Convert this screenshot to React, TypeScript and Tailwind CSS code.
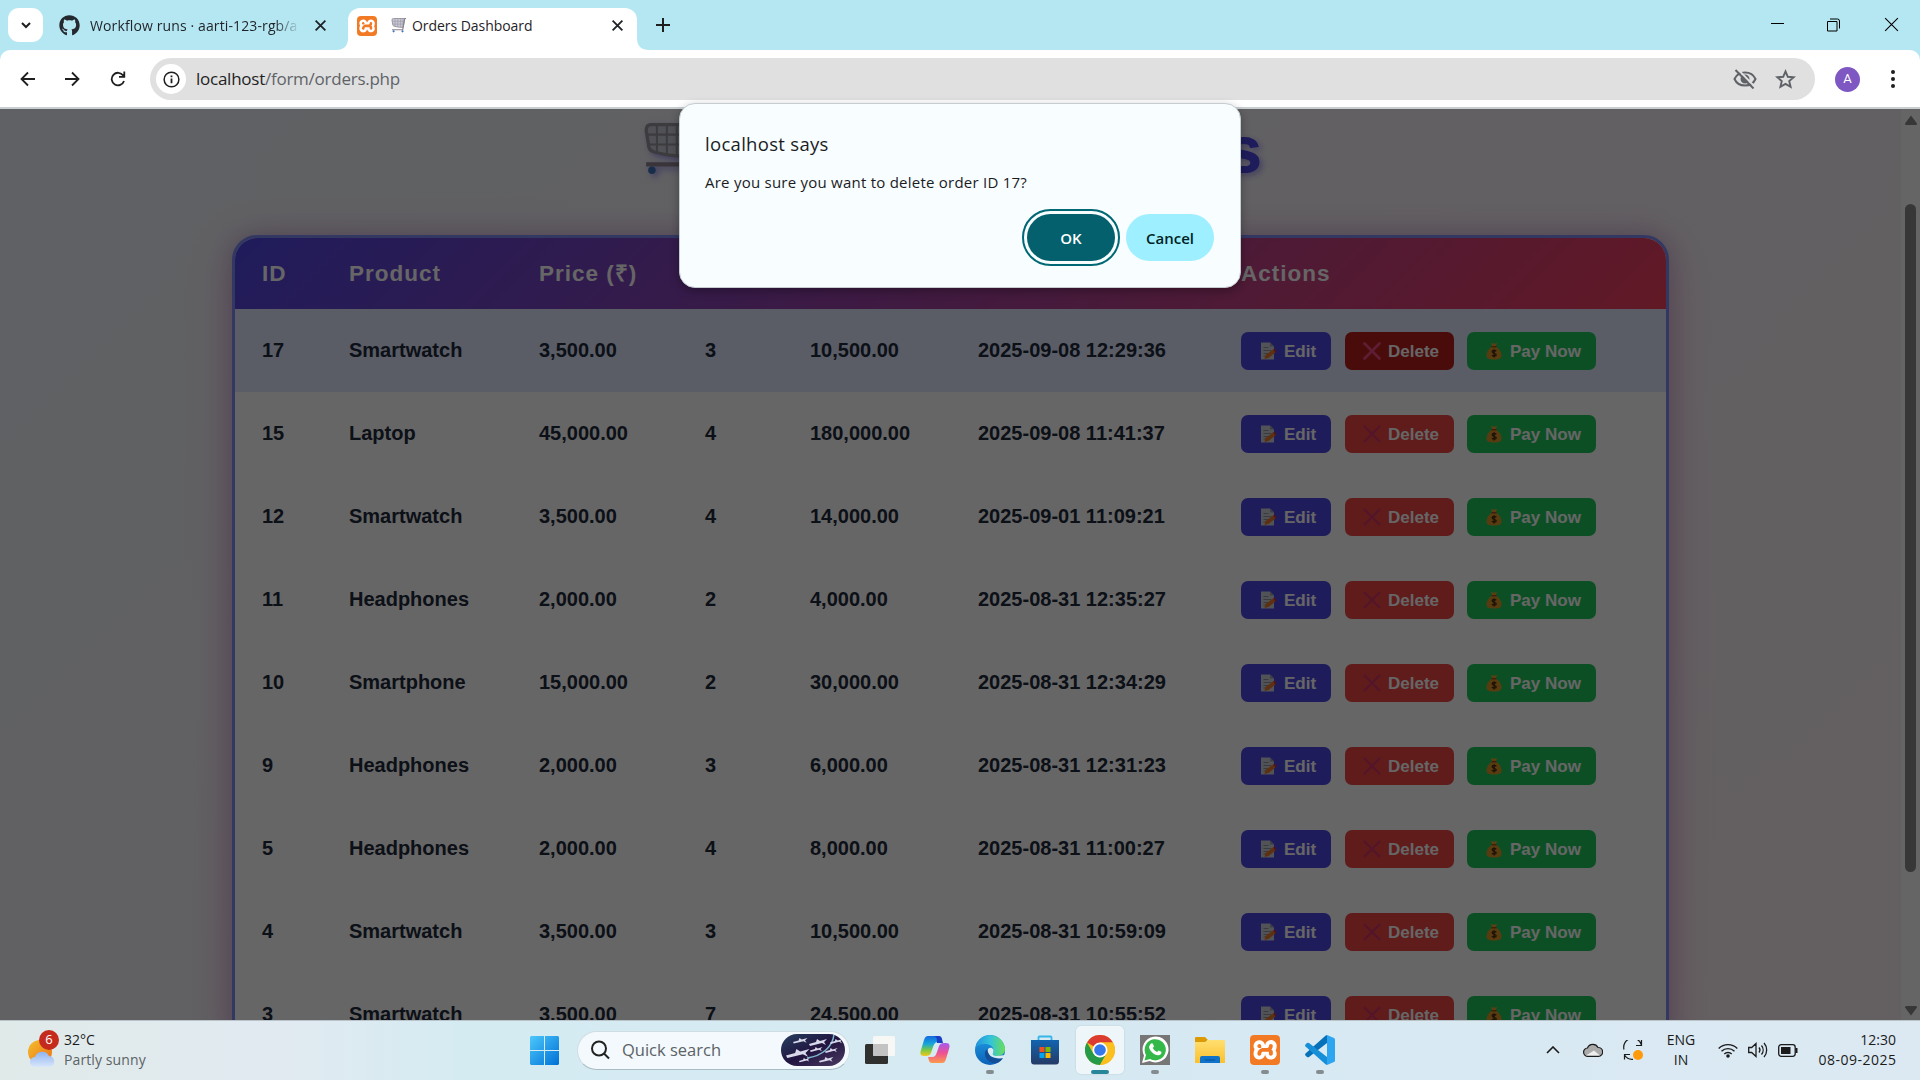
import React from "react";
import { FaGithub } from "react-icons/fa";
import { SiXampp } from "react-icons/si";

const orders = [
  ["17", "Smartwatch", "3,500.00", "3", "10,500.00", "2025-09-08 12:29:36"],
  ["15", "Laptop", "45,000.00", "4", "180,000.00", "2025-09-08 11:41:37"],
  ["12", "Smartwatch", "3,500.00", "4", "14,000.00", "2025-09-01 11:09:21"],
  ["11", "Headphones", "2,000.00", "2", "4,000.00", "2025-08-31 12:35:27"],
  ["10", "Smartphone", "15,000.00", "2", "30,000.00", "2025-08-31 12:34:29"],
  ["9", "Headphones", "2,000.00", "3", "6,000.00", "2025-08-31 12:31:23"],
  ["5", "Headphones", "2,000.00", "4", "8,000.00", "2025-08-31 11:00:27"],
  ["4", "Smartwatch", "3,500.00", "3", "10,500.00", "2025-08-31 10:59:09"],
  ["3", "Smartwatch", "3,500.00", "7", "24,500.00", "2025-08-31 10:55:52"],
];

function Cart({ className }: { className: string }) {
  return (
    <svg viewBox="0 0 64 64" className={className} fill="none">
      <path d="M8 2h48l-6 38c-14 0-28-2-38-5-5-1-7-4-7-8L2 9q0-7 6-7z" fill="#c9cad8" stroke="#96939c" strokeWidth="4" strokeLinejoin="round" />
      <path d="M15 3v33M27 3v35M39 3v36M49 3v36M3 14h50M5 26h47" stroke="#96939c" strokeWidth="2.500" />
      <path d="M62 1l-6 3-8 46H2" stroke="#8e8390" strokeWidth="5" />
      <circle cx="9" cy="57" r="4.500" fill="#3a72b8" />
      <circle cx="47" cy="57" r="4.500" fill="#3a72b8" />
    </svg>
  );
}

function Xampp({ className }: { className: string }) {
  return (
    <span className={`relative block overflow-hidden rounded-[4px] bg-white ${className}`}>
      <SiXampp className="h-full w-full scale-[1.06] text-[#f37a24]" />
    </span>
  );
}

const MemoIcon = () => (
  <svg viewBox="0 0 18 18" className="h-[18px] w-[18px]">
    <path d="M2 .5h9l4 4V17.500H2z" fill="#cdd0d8" />
    <path d="M11 .5l4 4h-4z" fill="#9a9fab" />
    <path d="M4.500 5.500h5M4.500 8.500h8M4.500 11.500h5M4.500 14h3" stroke="#8f94a1" />
    <path d="M5.500 17l1-4 7.500-5.500 2.500 3-7 5.500z" fill="#e8782e" />
    <path d="M14 7.500l1.500-1 2 3-1 1z" fill="#d8342c" />
  </svg>
);
const CrossIcon = ({ strong }: { strong: boolean }) => (
  <svg viewBox="0 0 18 18" className="h-[18px] w-[18px]" fill="none">
    <path d="M1.500 1.500l15 15M16.500 1.500l-15 15" className={strong ? "stroke-[#ee4a83]" : "stroke-[#cf3568]"} strokeWidth={strong ? 2.8 : 2} strokeLinecap="round" />
  </svg>
);
const MoneyIcon = () => (
  <svg viewBox="0 0 18 18" className="h-[18px] w-[18px]">
    <path d="M6 1l3 .8L12 1l-1.300 3.500H7.300z" fill="#e6a12c" />
    <path d="M6.500 5h5c3 2 5 5 5 8.500 0 3-2.500 4-7.500 4s-7.500-1-7.500-4C1.500 10 3.500 7 6.500 5z" fill="#dd962a" />
    <path d="M6.500 4.700h5" stroke="#a8481c" strokeWidth="1.500" />
    <path d="M11.200 9.200c-.8-1-4-1-4 .6 0 1.800 4 1.200 4 3 0 1.700-3.400 1.600-4.200.4M9.100 7.200v8.300" stroke="#4a2e10" strokeWidth="1.400" fill="none" />
  </svg>
);

function ActionButton({ icon, label, tone }: { icon: React.ReactNode; label: string; tone: string }) {
  return (
    <button className={`flex h-[38px] items-center gap-[7px] rounded-[7px] pl-[18px] text-[17px] font-bold text-white ${tone}`}>
      {icon}
      <span className="whitespace-nowrap pt-px">{label}</span>
    </button>
  );
}

const cols = "grid grid-cols-[87px_190px_166px_105px_168px_263px_1fr] items-center pl-[27px]";

function OrdersPage() {
  return (
    <div className="flex h-full flex-col items-center bg-[linear-gradient(135deg,#eff3f9_0%,#f4f0f6_50%,#faeff3_100%)] pr-[19px] font-['Liberation_Sans',Arial,sans-serif]">
      <h1 className="mt-[14px] flex h-[112px] w-[622px] shrink-0 items-start justify-between text-[64px] font-black leading-[54px] text-[#4f46e5] [-webkit-text-stroke:1px_#4f46e5] [text-shadow:3px_3px_6px_rgba(79,70,229,0.5)]">
        <Cart className="h-[53px] w-[62px] drop-shadow-[3px_3px_3px_rgba(79,70,229,0.5)]" />
        <span>Orders</span>
      </h1>
      <div className="w-[1437px] shrink-0 overflow-hidden rounded-[25px] border-[3px] border-[#818cf8] bg-white shadow-[0_10px_45px_rgba(236,72,153,0.28),0_0_25px_rgba(90,50,150,0.28)]">
        <div className={`${cols} h-[71px] bg-[linear-gradient(135deg,#4f46e5,#f43f5e)] text-[22.5px] font-bold tracking-[1px] text-white`}>
          <span>ID</span><span>Product</span><span>Price (₹)</span><span>Qty</span><span>Total (₹)</span><span>Date</span><span>Actions</span>
        </div>
        {orders.map((o, i) => (
          <div key={o[0]} className={`${cols} h-[83px] text-[20px] font-bold text-[#1e293b] ${i === 0 ? "bg-[#e0e7ff]" : "bg-white"}`}>
            {o.map((v, j) => <span key={j} className="pb-[2px]">{v}</span>)}
            <div className="flex pt-px">
              <ActionButton icon={<MemoIcon />} label="Edit" tone="mr-[14px] w-[90px] bg-[#4f46e5]" />
              <ActionButton icon={<CrossIcon strong={i === 0} />} label="Delete" tone={i === 0 ? "mr-[13px] w-[109px] bg-[#b91c1c]" : "mr-[13px] w-[109px] bg-[#ef4444]"} />
              <ActionButton icon={<MoneyIcon />} label="Pay Now" tone="w-[129px] bg-[#22c55e]" />
            </div>
          </div>
        ))}
      </div>
    </div>
  );
}

const X = ({ className }: { className: string }) => (
  <svg viewBox="0 0 12 12" className={className} fill="none" stroke="currentColor"><path d="M1.500 1.500l9 9M10.500 1.500l-9 9" /></svg>
);

function TabStrip() {
  return (
    <div className="flex h-[50px] shrink-0 items-end bg-[#b5e7f2] text-[14px] text-[#1f2328]">
      <div className="mb-2 ml-2 flex h-[34px] w-[35px] items-center justify-center rounded-[11px] bg-white">
        <svg viewBox="0 0 12 12" className="h-3 w-3" fill="none" stroke="#1f1f1f" strokeWidth="2"><path d="M2 4l4 4 4-4" /></svg>
      </div>
      <div className="mb-[8px] ml-[16px] flex h-[34px] w-[289px] items-center">
        <FaGithub className="h-[21px] w-[21px] text-[#24292f]" />
        <span className="ml-[10px] w-[210px] overflow-hidden whitespace-nowrap tracking-[0.12px] [mask-image:linear-gradient(to_right,#000_88%,transparent)]">Workflow runs · aarti-123-rgb/a</span>
        <X className="ml-[14px] h-[13px] w-[13px] [stroke-width:1.7]" />
      </div>
      <div className="relative flex h-[42px] w-[289px] items-center rounded-t-[12px] bg-white pb-[7px] pl-[9px]">
        <svg className="absolute -left-3 bottom-0 h-3 w-3" viewBox="0 0 12 12"><path d="M12 0v12H0Q12 12 12 0" fill="#fff" /></svg>
        <svg className="absolute -right-3 bottom-0 h-3 w-3" viewBox="0 0 12 12"><path d="M0 0v12h12Q0 12 0 0" fill="#fff" /></svg>
        <Xampp className="h-5 w-5" />
        <Cart className="ml-[14px] h-[15px] w-[16px]" />
        <span className="ml-[5px] w-[193px] tracking-[-0.05px]">Orders Dashboard</span>
        <X className="ml-[6px] h-[13px] w-[13px] [stroke-width:1.7]" />
      </div>
      <svg viewBox="0 0 14 14" className="mb-[18px] ml-[19px] h-[14px] w-[14px]" stroke="#1f1f1f" strokeWidth="2"><path d="M7 0v14M0 7h14" /></svg>
      <div className="mb-[17px] ml-auto flex items-center text-black">
        <div className="mb-[3px] h-px w-[13px] bg-black" />
        <svg viewBox="0 0 14 14" className="ml-[43px] h-[14px] w-[14px]" fill="none" stroke="#000"><path d="M.5 3.500h9.500v9.500H.5zM3 1h7.500a2 2 0 0 1 2 2v7.500" /></svg>
        <X className="ml-[42px] mr-[20px] h-[17px] w-[17px] [stroke-width:0.8]" />
      </div>
    </div>
  );
}

function Toolbar() {
  return (
    <div className="flex h-[57px] shrink-0 bg-[#b5e7f2]">
      <div className="flex flex-1 items-center rounded-t-[10px] bg-white pt-px text-[#1f1f1f]">
        <svg viewBox="0 0 16 16" className="ml-[20px] h-4 w-4" fill="none" stroke="currentColor" strokeWidth="1.800"><path d="M15 8H1.500M8 1.500L1.500 8 8 14.500" /></svg>
        <svg viewBox="0 0 16 16" className="ml-[28px] h-4 w-4" fill="none" stroke="currentColor" strokeWidth="1.800"><path d="M1 8h13.500M8 1.500L14.500 8 8 14.500" /></svg>
        <svg viewBox="0 0 16 16" className="ml-[30px] h-4 w-4" fill="none" stroke="currentColor" strokeWidth="1.800"><path d="M14 10a6.300 6.300 0 1 1-.8-5.500L14 5.500M14.300 .5v5.300H9" /></svg>
        <div className="ml-[24px] flex h-[42px] w-[1665px] items-center rounded-full bg-[#e0e0e0] text-[17px] text-[#5f6368]">
          <span className="ml-[6px] flex h-[30px] w-[30px] items-center justify-center rounded-full bg-white">
            <svg viewBox="0 0 18 18" className="h-[17px] w-[17px]" fill="none" stroke="#1f1f1f" strokeWidth="1.600"><circle cx="9" cy="9" r="7.800" /><path d="M9 8v5M9 4.700v1.800" strokeWidth="1.900" /></svg>
          </span>
          <span className="ml-[10px] tracking-[-0.25px]"><span className="text-[#1f1f1f]">localhost</span>/form/orders.php</span>
          <svg viewBox="0 0 24 20" className="ml-auto h-5 w-6" fill="none" stroke="#5f6368" strokeWidth="2"><path d="M1.500 10C3.500 5.500 7.500 3.500 12 3.500S20.500 5.500 22.500 10C20.500 14.500 16.500 16.500 12 16.500S3.500 14.500 1.500 10z" /><circle cx="12" cy="10" r="3.500" fill="#5f6368" /><path d="M4.500 0l18 18.500" stroke="#e0e0e0" /><path d="M2.500 1l18 18.500" /></svg>
          <svg viewBox="0 0 24 24" className="ml-[17px] mr-[18px] h-[23px] w-[23px]" fill="none" stroke="#5f6368" strokeWidth="2"><path d="M12 3.500l2.400 5.700 6.100.5-4.600 4 1.400 6L12 16.500l-5.300 3.200 1.400-6-4.600-4 6.100-.5z" /></svg>
        </div>
        <span className="ml-[20px] flex h-[25px] w-[25px] items-center justify-center rounded-full bg-[#7e57c2] font-[Roboto,sans-serif] text-[13px] text-white">A</span>
        <div className="ml-[31px] flex flex-col gap-[3px]">
          <i className="h-1 w-1 rounded-full bg-[#1f1f1f]" /><i className="h-1 w-1 rounded-full bg-[#1f1f1f]" /><i className="h-1 w-1 rounded-full bg-[#1f1f1f]" />
        </div>
      </div>
    </div>
  );
}

function Dialog() {
  return (
    <div className="absolute left-[679px] top-[103px] flex h-[185px] w-[562px] flex-col rounded-[16px] border border-[#c5cdd0] bg-[#f8fdff] px-[25px] text-[#1a1c1e] shadow-[0_3px_10px_rgba(0,0,0,0.3)]">
      <p className="mt-[26px] text-[18.5px] font-medium leading-7 tracking-[0.3px]">localhost says</p>
      <p className="mt-[12px] text-[15px] leading-6 tracking-[0.24px]">Are you sure you want to delete order ID 17?</p>
      <div className="mt-[20px] flex justify-end gap-[11px] text-[15px] font-semibold">
        <button className="h-[47px] w-[88px] rounded-full bg-[#04606c] pt-px text-white outline-[2px] outline-offset-[3px] outline-[#006874]">OK</button>
        <button className="mr-px h-[47px] w-[88px] rounded-full bg-[#9eefff] pt-px text-[#001f24]">Cancel</button>
      </div>
    </div>
  );
}

function Scrollbar() {
  return (
    <div className="absolute right-0 top-0 flex h-full w-[19px] flex-col items-center bg-[#fcfcfc]">
      <svg viewBox="0 0 12 10" className="mt-[6px] h-[10px] w-3"><path d="M6 .5L12 8.500q0 1.500-1 1.500H1Q0 10 0 8.500z" fill="#8b8b8b" /></svg>
      <div className="mt-[79px] h-[668px] w-[11px] rounded-full bg-[#8b8b8b]" />
      <svg viewBox="0 0 12 10" className="mt-[134px] h-[10px] w-3"><path d="M6 9.500L12 1.500Q12 0 11 0H1Q0 0 0 1.500z" fill="#8b8b8b" /></svg>
    </div>
  );
}

function TaskItem({ children, mark }: { children: React.ReactNode; mark?: "run" | "active" }) {
  return (
    <div className={`flex h-[48px] w-[48px] flex-col items-center rounded-[5px] pt-[9px] ${mark === "active" ? "bg-white/60 shadow-[0_0_2px_rgba(0,0,0,0.15)]" : ""}`}>
      <div className="h-[30px] w-[30px]">{children}</div>
      {mark === "run" && <i className="mt-[5px] h-1 w-2 shrink-0 rounded-full bg-[#848c90]" />}
      {mark === "active" && <i className="mt-[5px] h-1 w-[18px] shrink-0 rounded-full bg-[#27869a]" />}
    </div>
  );
}

function Plane({ x, y, s }: { x: number; y: number; s: number }) {
  return <path transform={`translate(${x} ${y}) scale(${s})`} d="M0 5l7-2 1-3 3 2 7-2-3 3 2 3-4-2-12 3z" fill="#d9d8ea" />;
}

function Taskbar() {
  return (
    <div className="flex h-[60px] shrink-0 items-center border-t border-[#b9c4ca] bg-[linear-gradient(90deg,#e0eae9_0%,#e1eaf1_15%,#d5ebf2_24%,#d6e9f2_60%,#dce9f3_100%)] pb-px">
      <div className="flex w-[530px] items-center pl-[27px]">
        <div className="relative mb-[2px] h-[38px] w-[30px]">
          <svg viewBox="0 0 30 38" className="h-[38px] w-[30px]">
            <defs>
              <linearGradient id="sun" x2="1" y2="1"><stop stopColor="#f3c02d" /><stop offset="1" stopColor="#ee6e16" /></linearGradient>
              <linearGradient id="cl" x2="0" y2="1"><stop stopColor="#8fb4f0" /><stop offset="1" stopColor="#d8e6fb" /></linearGradient>
            </defs>
            <circle cx="13" cy="22" r="12" fill="url(#sun)" />
            <path d="M8 37a5 5 0 0 1 0-10 7.500 7.500 0 0 1 14-1 5.600 5.600 0 0 1 1 11z" fill="url(#cl)" />
          </svg>
          <span className="absolute -right-[2px] top-0 flex h-5 w-5 items-center justify-center rounded-full bg-[#c42b1c] text-[13px] text-white">6</span>
        </div>
        <div className="mb-px ml-[7px] text-[14px] leading-5 text-[#1b1b1b]"><p>32°C</p><p className="tracking-[0.1px] text-[#5c6266]">Partly sunny</p></div>
      </div>
      <svg viewBox="0 0 29 29" className="h-[29px] w-[29px]">
        <defs><linearGradient id="win" x2="1" y2="1"><stop stopColor="#4cc8fb" /><stop offset="1" stopColor="#0070d6" /></linearGradient></defs>
        <path d="M1 0h13v14H0V1zM15 0h13l1 1v13H15zM0 15h14v14H1l-1-1zM15 15h14v13l-1 1H15z" fill="url(#win)" />
      </svg>
      <div className="ml-[18px] flex h-[39px] w-[273px] items-center rounded-full border border-[#cfdde3] border-b-[#a9bcc5] bg-[#f3f9fc] pl-[12px] pr-1">
        <svg viewBox="0 0 20 20" className="h-5 w-5" fill="none" stroke="#222" strokeWidth="2"><circle cx="9" cy="8.500" r="7" /><path d="M14 13.500l5 5" /></svg>
        <span className="ml-[12px] text-[16.5px] text-[#5c6266]">Quick search</span>
        <svg viewBox="0 0 64 32" className="ml-auto h-8 w-16 rounded-l-[16px] rounded-r-[16px]">
          <defs><linearGradient id="sp" x2="1" y2="1"><stop stopColor="#26405f" /><stop offset=".5" stopColor="#211440" /><stop offset="1" stopColor="#4b3b62" /></linearGradient></defs>
          <rect width="64" height="32" fill="url(#sp)" />
          <path d="M53 0C52 12 42 22 26 24" stroke="#7fb6cf" strokeWidth="1.500" fill="none" />
          <Plane x={12} y={4} s={0.8} /><Plane x={28} y={5} s={1} /><Plane x={5} y={15} s={1.3} /><Plane x={29} y={13} s={0.7} /><Plane x={44} y={14} s={0.7} /><Plane x={38} y={23} s={0.8} /><Plane x={18} y={24} s={0.6} /><Plane x={49} y={5} s={0.7} />
        </svg>
      </div>
      <div className="ml-[6px] flex gap-[7px]">
        <TaskItem><svg viewBox="0 0 30 30"><rect y="9" width="23" height="20" rx="1.500" fill="#30312f" /><rect x="8" y="1" width="22" height="20" rx="1.500" fill="#f7f7f6" /><path d="M8 9h15v12H9.500L8 20z" fill="#c3c3c3" /></svg></TaskItem>
        <TaskItem><svg viewBox="0 0 30 30">
          <defs>
            <linearGradient id="cp1" x2="0" y2="1"><stop stopColor="#1568e0" /><stop offset=".4" stopColor="#16a7d8" /><stop offset=".7" stopColor="#7ac943" /><stop offset="1" stopColor="#f4c81c" /></linearGradient>
            <linearGradient id="cp2" x2="0" y2="1"><stop stopColor="#a45af0" /><stop offset=".5" stopColor="#ee5192" /><stop offset="1" stopColor="#fb9a4c" /></linearGradient>
          </defs>
          <path d="M8 1h10c3 0 3 3 4 6h-4c-3 0-4 2-5 5l-2 6c-1 2-2 3-5 3H4c-4 0-4-3-3-6L4 5c1-3 2-4 4-4z" fill="url(#cp1)" />
          <path d="M16 1h3c3 0 3 3 4 7h-6c0-4 0-6-3-7z" fill="#1b3fc4" />
          <path d="M22 28H12c-3 0-3-3-4-6h4c3 0 4-2 5-5l2-6c1-2 2-3 5-3h2c4 0 4 3 3 6l-3 10c-1 3-2 4-4 4z" fill="url(#cp2)" />
        </svg></TaskItem>
        <TaskItem mark="run"><svg viewBox="0 0 30 30">
          <defs>
            <linearGradient id="e1" x2="1" y2="0"><stop stopColor="#2494dc" /><stop offset=".5" stopColor="#33c3da" /><stop offset="1" stopColor="#6bdf55" /></linearGradient>
            <linearGradient id="e2" x2="0" y2="1"><stop stopColor="#1f9de4" /><stop offset="1" stopColor="#0b62b8" /></linearGradient>
          </defs>
          <circle cx="15" cy="15" r="15" fill="url(#e2)" />
          <path d="M1 10A15 15 0 0 1 30 14c0 5-4 7-8 7-3 0-5-1-4-3 2-6-3-9-8-9-4 0-7 1-9 3z" fill="url(#e1)" />
          <path d="M10 17c-1 7 5 12 12 11 3-1 5-3 6.500-6-3 2-10 2-13-1-2-2-2-4-1-6-2-1-4 0-4.500 2z" fill="#124f98" />
          <path d="M13 14c3-3 7 0 5 4-1 2 1 3 4 3l8-1v4l-1.500-1c-4 1-10 0-13-2-2-2-3.500-5-2.500-7z" fill="#d9ebf3" />
        </svg></TaskItem>
        <TaskItem><svg viewBox="0 0 30 30">
          <defs><linearGradient id="st" x2="0" y2="1"><stop stopColor="#1264b0" /><stop offset="1" stopColor="#253a66" /></linearGradient></defs>
          <path d="M8.500 7V2.500q0-1 1-1h11q1 0 1 1V7" fill="none" stroke="#35b5e8" strokeWidth="1.800" />
          <path d="M1 5h28v21q0 3.500-3 3.500H4Q1 29.500 1 26z" fill="url(#st)" />
          <path d="M9.500 12h5v5h-5z" fill="#f25022" /><path d="M15.500 12h5v5h-5z" fill="#7fba00" /><path d="M9.500 18h5v5h-5z" fill="#00a4ef" /><path d="M15.500 18h5v5h-5z" fill="#ffb900" />
        </svg></TaskItem>
        <TaskItem mark="active"><svg viewBox="0 0 30 30">
          <circle cx="15" cy="15" r="15" fill="#fbc01f" />
          <path d="M15 15L2 7.500A15 15 0 0 1 28 7.500H15z" fill="#dc3b30" />
          <path d="M2 7.500A15 15 0 0 0 15 30l6.500-11.250L15 15 8.500 18.750z" fill="#259a48" />
          <path d="M15 30l6.500-11.250L15 15V7.500h13A15 15 0 0 1 15 30z" fill="#fbc01f" />
          <circle cx="15" cy="15" r="7.500" fill="#fff" /><circle cx="15" cy="15" r="5.800" fill="#3478ec" />
        </svg></TaskItem>
        <TaskItem mark="run"><div className="flex h-[30px] w-[30px] items-center justify-center bg-[#767676]"><svg viewBox="0 0 30 30" className="h-[30px] w-[30px]"><path d="M2 28l2-7.500A13 13 0 1 1 9.500 26z" fill="#fff" /><path d="M4.500 25.500l1.500-5.500A10.600 10.600 0 1 1 10 24z" fill="#35b84a" /><path d="M10.500 9c1-1 2-1 2.500 0l1 2.500-1.200 1.500c1 2 2.500 3.200 4.400 4l1.400-1.500 2.700 1.300c.7 2-1.300 3.500-3.300 3.500-4 0-9-5-9-8.500z" fill="#fff" /></svg></div></TaskItem>
        <TaskItem><svg viewBox="0 0 30 30">
          <defs><linearGradient id="fo" x2="0" y2="1"><stop stopColor="#ffdf70" /><stop offset="1" stopColor="#fbc02d" /></linearGradient></defs>
          <path d="M0 3q0-1 1-1h9l3 3h-1v4H0z" fill="#dc9b05" /><path d="M0 7h10l3-2h16q1 0 1 1v22H0z" fill="url(#fo)" /><path d="M5 28v-5q0-2 2-2h16q2 0 2 2v5z" fill="#0f74c9" /><path d="M10 25h10" stroke="#0a4f94" />
        </svg></TaskItem>
        <TaskItem mark="run"><Xampp className="h-[30px] w-[30px]" /></TaskItem>
        <TaskItem mark="run"><svg viewBox="0 0 30 30">
          <path d="M22 0l7 3q1 .5 1 1.500v21q0 1-1 1.500l-7 3z" fill="#2da5f0" />
          <path d="M22 0v8L4 22q-1 .7-2 0l-1.500-1.500q-.8-1 0-2L20.500.8z" fill="#0670b8" />
          <path d="M22 30v-8L4 8Q3 7.300 2 8L.5 9.500q-.8 1 0 2L20.500 29.200z" fill="#168fd8" />
        </svg></TaskItem>
      </div>
      <div className="ml-auto flex items-center pr-[24px] text-[#1b1b1b]">
        <svg viewBox="0 0 14 8" className="h-2 w-[14px]" fill="none" stroke="currentColor" strokeWidth="1.600"><path d="M1 7l6-6 6 6" /></svg>
        <svg viewBox="0 0 20 14" className="ml-[23px] h-[14px] w-5" fill="#aaa" stroke="#1b1b1b" strokeWidth="1.200"><path d="M5 13.300A4 4 0 0 1 4.500 5a5.800 5.800 0 0 1 10.500-.5 4.400 4.400 0 0 1 .5 8.800z" /><path d="M3 12.500l8-5 6 5z" fill="#eee" stroke="none" /></svg>
        <svg viewBox="0 0 20 20" className="ml-[20px] h-5 w-5" fill="none" stroke="#1b1b1b" strokeWidth="1.200"><path d="M1 9.500A9 9 0 0 1 18.500 5M18.500 0v5.500H13M7 14.500H1.500v5M1.500 15A9 9 0 0 0 10 19.300" /><circle cx="15" cy="15" r="5" fill="#ff9a0a" stroke="none" /></svg>
        <div className="mb-px ml-[23px] w-[30px] text-center text-[14px] leading-5"><p>ENG</p><p>IN</p></div>
        <svg viewBox="0 0 20 15" className="ml-[22px] h-[15px] w-5" fill="none" stroke="#1b1b1b" strokeWidth="1.400"><path d="M.7 5.500a13.200 13.200 0 0 1 18.600 0M3.500 8.300a9.200 9.200 0 0 1 13 0M6.300 11a5.300 5.300 0 0 1 7.400 0" /><circle cx="10" cy="13" r="1.800" fill="#1b1b1b" stroke="none" /></svg>
        <svg viewBox="0 0 20 16" className="ml-[10px] h-4 w-5" fill="none" stroke="#1b1b1b" strokeWidth="1.300"><path d="M.7 5.500h3L8 1.500v13L3.700 10.500h-3zM11 5.500a4 4 0 0 1 0 5M13.500 3.500a7 7 0 0 1 0 9M16 1a10.500 10.500 0 0 1 0 14" /></svg>
        <svg viewBox="0 0 20 13" className="ml-[10px] h-[13px] w-5" fill="none" stroke="#1b1b1b" strokeWidth="1.300"><rect x=".7" y=".7" width="16.500" height="11.600" rx="2.500" /><rect x="3" y="3" width="9.500" height="7" fill="#1b1b1b" stroke="none" /><path d="M18.500 4v5" strokeWidth="2" /></svg>
        <div className="mb-px ml-[18px] w-[80px] whitespace-nowrap text-right text-[14px] leading-5"><p>12:30</p><p className="-mr-[0.5px] tracking-[0.5px]">08-09-2025</p></div>
      </div>
    </div>
  );
}

export default function App() {
  return (
    <div className="relative flex h-[1080px] w-[1920px] flex-col overflow-hidden font-['Open_Sans','Noto_Sans',sans-serif]">
      <TabStrip />
      <Toolbar />
      <div className="h-[2px] shrink-0 bg-[#c9cfd1]" />
      <div className="relative min-h-0 flex-1 overflow-hidden">
        <OrdersPage />
        <Scrollbar />
        <div className="absolute inset-0 bg-black/60" />
      </div>
      <Taskbar />
      <Dialog />
    </div>
  );
}
